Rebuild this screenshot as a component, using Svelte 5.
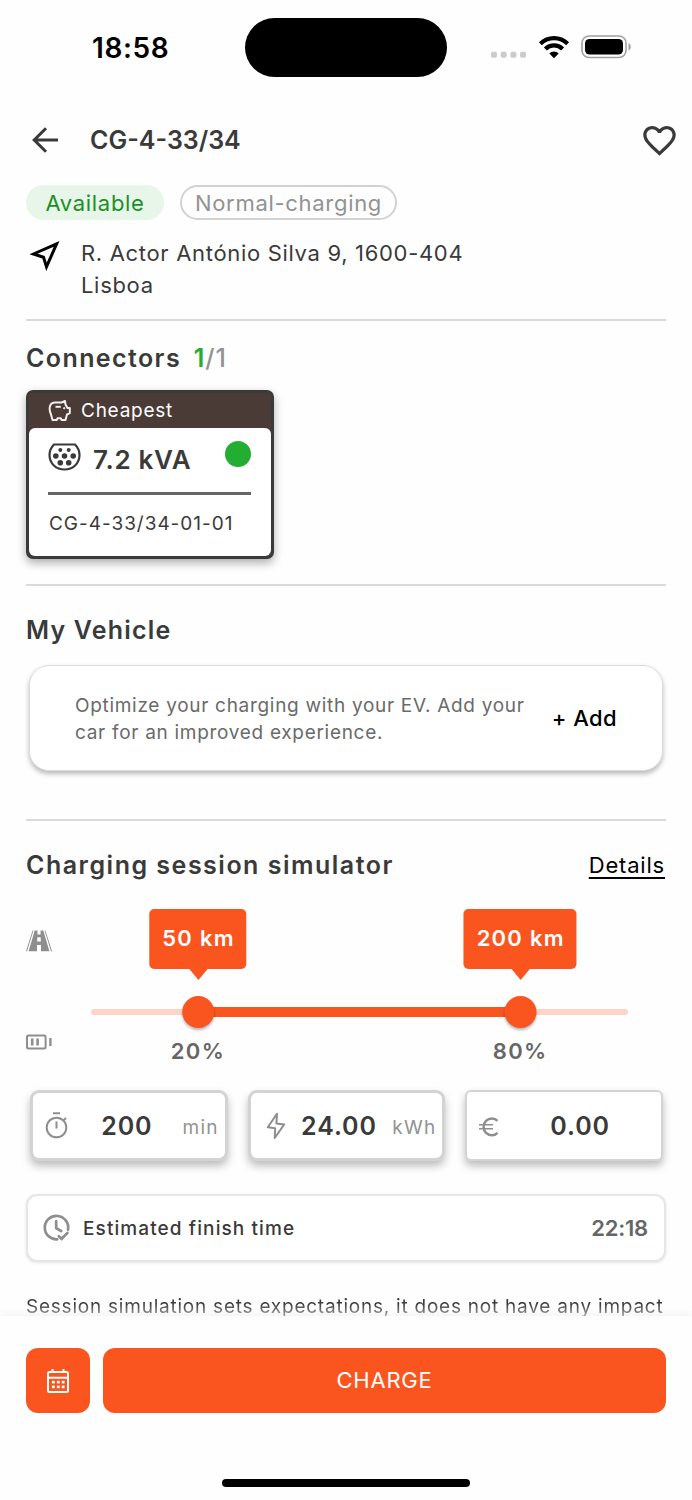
<script lang="ts">
	const minSoc = 20;
	const maxSoc = 80;

	const handles = [
		{ soc: minSoc, range: 50 },
		{ soc: maxSoc, range: 200 }
	];
</script>

<main class="screen">
	<header class="status-bar">
		<span class="clock">18:58</span>
		<div class="island"></div>
		<div class="indicators">
			<svg class="signal" width="36" height="8" viewBox="0 0 36 8" fill="#cbcbcb">
				<rect x="0" y="0.8" width="6" height="6" rx="1.8" />
				<rect x="9.7" y="0.8" width="6" height="6" rx="1.8" />
				<rect x="19.4" y="0.8" width="6" height="6" rx="1.8" />
				<rect x="29" y="0.8" width="6" height="6" rx="1.8" />
			</svg>
			<svg class="wifi" width="32" height="24" viewBox="0 0 32 24">
				<g fill="none" stroke="#000" stroke-width="4.2">
					<path d="M2.4 8.8a19.3 19.3 0 0 1 27.2 0" />
					<path d="M7.4 14a12.2 12.2 0 0 1 17.2 0" />
				</g>
				<path d="M16 23.2l-4.7-4.7a6.8 6.8 0 0 1 9.4 0z" />
			</svg>
			<svg class="battery" width="51" height="24" viewBox="0 0 51 24">
				<rect x="1" y="1" width="44" height="21.5" rx="7" fill="none" stroke="#a0a0a0" stroke-width="1.6" />
				<rect x="4" y="4" width="38" height="15.5" rx="4.5" />
				<path d="M47.5 8v7.6c3-1.4 3-6.2 0-7.6z" fill="#a0a0a0" />
			</svg>
		</div>
	</header>

	<div class="title-row">
		<svg class="back" width="28" height="28" viewBox="0 0 28 28" fill="none" stroke="#3a3a3a" stroke-width="3">
			<path d="M26 14H3M14 2.2L2.2 14L14 25.8" />
		</svg>
		<h1>CG-4-33/34</h1>
		<svg class="heart" width="39" height="39" viewBox="0 0 24 24" fill="#3a3a3a">
			<path
				d="M16.5 3c-1.74 0-3.41.81-4.5 2.09C10.91 3.81 9.24 3 7.5 3 4.42 3 2 5.42 2 8.5c0 3.78 3.4 6.86 8.55 11.54L12 21.35l1.45-1.32C18.6 15.36 22 12.28 22 8.5 22 5.42 19.58 3 16.5 3zm-4.4 15.55l-.1.1-.1-.1C7.14 14.24 4 11.39 4 8.5 4 6.5 5.5 5 7.5 5c1.54 0 3.04.99 3.57 2.36h1.87C13.46 5.99 14.96 5 16.5 5c2 0 3.5 1.5 3.5 3.5 0 2.89-3.14 5.74-7.9 10.05z"
			/>
		</svg>
	</div>

	<div class="badges">
		<span class="badge available">Available</span>
		<span class="badge speed">Normal-charging</span>
	</div>

	<div class="address">
		<svg width="30" height="30" viewBox="0 0 30 30" fill="none" stroke="#000" stroke-width="3">
			<path d="M26.6 2.9L3.5 13L13.5 16.2L16.5 25.8Z" />
		</svg>
		<p>R. Actor António Silva 9, 1600-404<br />Lisboa</p>
	</div>

	<section class="connectors">
		<h2>Connectors <span class="count"><b>1</b>/1</span></h2>
		<div class="connector-card">
			<div class="cheapest">
				<svg width="24" height="22" viewBox="0 0 24 22" fill="none" stroke="#f2eeed" stroke-width="2" stroke-linejoin="round">
					<path
						d="M7 2.5H13.5L17 1L17.5 4.5L19.5 8H21.8V13.2L19 14.5L17.5 20H13.5L12.8 18.2H9.5L8.8 20H4.5L3 14.5C1.5 11 1 8.5 2.2 5.5C3 3.5 4.5 2.5 7 2.5Z"
					/>
					<path d="M7.5 6.8H12.8" />
					<circle cx="16.2" cy="8.2" r="0.7" fill="#f2eeed" stroke-width="1" />
				</svg>
				<span>Cheapest</span>
			</div>
			<div class="connector-body">
				<div class="power">
					<svg width="33" height="28" viewBox="0 0 33 28">
						<path
							d="M6 1.5H27C30 4.5 31.5 8 31.5 12C31.5 20.5 24.8 26.5 16.5 26.5S1.5 20.5 1.5 12C1.5 8 3 4.5 6 1.5Z"
							fill="none"
							stroke="#3a3a3a"
							stroke-width="2.2"
						/>
						<g fill="#3a3a3a">
							<circle cx="12.3" cy="7" r="2" />
							<circle cx="20.7" cy="7" r="2" />
							<circle cx="7.8" cy="13" r="2.8" />
							<circle cx="16.5" cy="13" r="2.8" />
							<circle cx="25.2" cy="13" r="2.8" />
							<circle cx="12.3" cy="19.8" r="2.8" />
							<circle cx="20.7" cy="19.8" r="2.8" />
						</g>
					</svg>
					<strong>7.2 kVA</strong>
					<i class="dot"></i>
				</div>
				<p class="connector-id">CG-4-33/34-01-01</p>
			</div>
		</div>
	</section>

	<section class="vehicle">
		<h2>My Vehicle</h2>
		<div class="vehicle-card">
			<p>Optimize your charging with your EV. Add your<br />car for an improved experience.</p>
			<button class="add">+ Add</button>
		</div>
	</section>

	<section class="simulator">
		<div class="simulator-head">
			<h2>Charging session simulator</h2>
			<a href="#details">Details</a>
		</div>

		<div class="range">
			<div class="range-icons">
				<svg width="26" height="22" viewBox="0 0 26 22" fill="#8e8e8e">
					<path d="M8.7 0.5H11.4V4.5H14.6V0.5H17.3L23.4 21.2H15V15H11V21.2H2.6ZM11.4 7.2L11.1 11.5H14.9L14.6 7.2Z" fill-rule="evenodd" />
					<path d="M7.4 0.5L1 21.2H0L6.6 0.5ZM18.6 0.5L25 21.2H26L19.4 0.5Z" />
				</svg>
				<svg width="27" height="16" viewBox="0 0 27 16" fill="none" stroke="#8e8e8e" stroke-width="2">
					<rect x="1" y="1.5" width="18.6" height="13" rx="1.5" />
					<path d="M6.2 4.5V11.5M11.6 4.5V11.5" stroke-width="2.6" />
					<path d="M24.4 4V12" stroke-width="2.4" />
				</svg>
			</div>
			<div class="track">
				<div class="active" style="left: {minSoc}%; width: {maxSoc - minSoc}%"></div>
				{#each handles as handle}
					<div class="handle" style="left: {handle.soc}%">
						<span class="bubble">{handle.range} km</span>
						<span class="thumb"></span>
						<span class="soc">{handle.soc}%</span>
					</div>
				{/each}
			</div>
		</div>

		<div class="results">
			<div class="result">
				<svg width="24" height="27" viewBox="0 0 24 27" fill="none" stroke="#8e8e8e" stroke-width="2">
					<circle cx="11.5" cy="15.5" r="9.8" />
					<path d="M8 1.2H15M11.5 9.5V16.5M18.5 8.5L21 6" />
				</svg>
				<strong>200</strong>
				<span>min</span>
			</div>
			<div class="result energy">
				<svg width="20" height="28" viewBox="0 0 20 28" fill="none" stroke="#8e8e8e" stroke-width="2" stroke-linejoin="round">
					<path d="M11 1.8L1.8 15.3L9.2 16.2L8.7 26L18.2 12.4L10.4 11.6Z" />
				</svg>
				<strong>24.00</strong>
				<span>kWh</span>
			</div>
			<div class="result cost">
				<svg width="20" height="20" viewBox="0 0 20 20" fill="none" stroke="#8e8e8e">
					<path d="M18.5 3.8C17 2.2 15.2 1.4 13 1.4C8.2 1.4 4.6 5 4.6 9.8S8.2 18.2 13 18.2C15.2 18.2 17 17.4 18.5 15.8" stroke-width="2.5" />
					<path d="M0 7.8H14M0 11.8H14" stroke-width="1.6" />
				</svg>
				<strong>0.00</strong>
			</div>
		</div>

		<div class="finish">
			<svg width="28" height="28" viewBox="0 0 28 28" fill="none" stroke="#8e8e8e" stroke-width="2.7" stroke-linecap="round">
				<path d="M25 15.8A11.7 11.7 0 1 0 14.2 25.3" />
				<path d="M13.2 7V14.2L18.2 17" />
				<path d="M15.8 22.2L18.6 24.8L24.4 19" />
			</svg>
			<span>Estimated finish time</span>
			<time>22:18</time>
		</div>

		<p class="note">Session simulation sets expectations, it does not have any impact</p>
	</section>

	<footer class="actions">
		<div class="buttons">
			<button class="schedule" aria-label="Schedule">
				<svg width="24" height="26" viewBox="0 0 24 26" fill="none" stroke="#fff" stroke-width="2">
					<rect x="2" y="4" width="20" height="20" rx="1.5" />
					<path d="M2 9.7H22M6.5 1V5M17.5 1V5" />
					<g fill="#fff" stroke="none">
						<rect x="6" y="12.8" width="2.8" height="2.6" />
						<rect x="10.9" y="12.8" width="2.8" height="2.6" />
						<rect x="15.8" y="12.8" width="2.8" height="2.6" />
						<rect x="6" y="17.6" width="2.8" height="2.6" />
						<rect x="10.9" y="17.6" width="2.8" height="2.6" />
						<rect x="15.8" y="17.6" width="2.8" height="2.6" />
					</g>
				</svg>
			</button>
			<button class="charge">CHARGE</button>
		</div>
		<div class="home-indicator"></div>
	</footer>
</main>

<style>
	:global(body) {
		background: #fff;
	}
	.screen {
		display: flex;
		flex-direction: column;
		box-sizing: border-box;
		width: 692px;
		height: 1500px;
		overflow: hidden;
		background: #fefefe;
		color: #3a3a3a;
		font-family: Inter, 'Liberation Sans', sans-serif;
	}
	.screen :global(*) {
		box-sizing: border-box;
	}
	h1,
	h2,
	p {
		margin: 0;
		white-space: nowrap;
	}
	h1,
	h2 {
		font-size: 25px;
		font-weight: 600;
		line-height: 32px;
	}
	h2 {
		letter-spacing: 1.4px;
	}
	svg {
		display: block;
		flex: none;
	}
	button {
		border: 0;
		padding: 0;
		font-family: inherit;
	}

	.status-bar {
		display: grid;
		grid-template-columns: 245px 202px 1fr;
		height: 95px;
		padding-top: 18px;
		color: #000;
	}
	.clock {
		padding-left: 92px;
		font-size: 28px;
		font-weight: 600;
		line-height: 60px;
		letter-spacing: 0.6px;
	}
	.island {
		height: 59px;
		border-radius: 30px;
		background: #000;
	}
	.indicators {
		display: flex;
		height: 57px;
		align-items: center;
		padding-left: 44px;
	}
	.signal {
		margin-top: 16px;
	}
	.wifi {
		margin-left: 11px;
	}
	.battery {
		margin-left: 11px;
	}

	.title-row {
		display: flex;
		align-items: center;
		height: 90px;
		padding: 0 13px 0 32px;
	}
	h1 {
		flex: 1;
		margin-left: 30px;
	}

	.badges {
		display: flex;
		gap: 16px;
		height: 35px;
		padding-left: 26px;
	}
	.badge {
		display: flex;
		align-items: center;
		justify-content: center;
		border-radius: 18px;
		font-size: 22px;
		letter-spacing: 0.7px;
	}
	.available {
		width: 138px;
		background: #e8f6ea;
		color: #1b8f26;
	}
	.speed {
		width: 217px;
		border: 2px solid #d2d2d2;
		color: #929292;
	}

	.address {
		display: flex;
		height: 101px;
		margin: 0 26px;
		padding: 17px 0 0 4px;
		border-bottom: 2px solid #dadada;
	}
	.address svg {
		margin-top: 4px;
	}
	.address p {
		margin-left: 21px;
		font-size: 22px;
		line-height: 32px;
		letter-spacing: 0.68px;
	}

	.connectors {
		height: 265px;
		margin: 0 26px;
		padding-top: 21px;
		border-bottom: 2px solid #dadada;
	}
	.count {
		margin-left: 5px;
		color: #929292;
		font-weight: 500;
		letter-spacing: 1px;
	}
	.count b {
		color: #23ad33;
		font-weight: 600;
	}
	.connector-card {
		width: 248px;
		height: 169px;
		margin-top: 16px;
		border: 3px solid #3a3a3a;
		border-radius: 7px;
		background: #4b3b37;
		box-shadow: 0 4px 10px rgba(0, 0, 0, 0.32);
	}
	.cheapest {
		display: flex;
		align-items: center;
		height: 35px;
		padding-left: 19px;
		color: #fff;
		font-size: 19px;
		letter-spacing: 0.75px;
	}
	.cheapest span {
		margin: 0 0 0 9px;
	}
	.connector-body {
		height: 128px;
		padding: 0 20px 0 19px;
		border-radius: 6px;
		background: #fff;
	}
	.power {
		display: flex;
		align-items: center;
		height: 67px;
		padding-bottom: 7px;
		border-bottom: 3px solid #666;
	}
	.power strong {
		flex: 1;
		margin: 5px 0 0 12px;
		font-size: 26px;
		font-weight: 600;
		letter-spacing: 0.7px;
	}
	.dot {
		width: 26px;
		height: 26px;
		margin-bottom: 6px;
		border-radius: 50%;
		background: #23ad33;
	}
	.connector-id {
		padding-left: 1px;
		font-size: 19px;
		line-height: 57px;
		letter-spacing: 0.97px;
	}

	.vehicle {
		height: 235px;
		margin: 0 26px;
		padding-top: 28px;
		border-bottom: 2px solid #dadada;
	}
	.vehicle h2 {
		letter-spacing: 1.2px;
	}
	.vehicle-card {
		display: flex;
		align-items: center;
		height: 106px;
		margin: 19px 3px 0;
		padding: 0 45px;
		border: 1px solid #ddd;
		border-radius: 20px;
		background: #fff;
		box-shadow: 0 3px 5px rgba(0, 0, 0, 0.27);
	}
	.vehicle-card p {
		flex: 1;
		padding-top: 1px;
		color: #6a6a6a;
		font-size: 19px;
		line-height: 27px;
		letter-spacing: 0.7px;
	}
	.add {
		background: none;
		color: #000;
		font-size: 22px;
		font-weight: 500;
		letter-spacing: 0.4px;
	}

	.simulator {
		height: 495px;
		padding: 28px 26px 0;
	}
	.simulator-head {
		display: flex;
		justify-content: space-between;
	}
	.simulator-head h2 {
		letter-spacing: 1.5px;
	}
	.simulator-head a {
		color: #000;
		font-size: 22px;
		line-height: 33px;
		letter-spacing: 0.8px;
		margin-right: 1px;
		text-decoration: underline;
		text-decoration-thickness: 2px;
		text-underline-offset: 4px;
	}

	.range {
		display: flex;
		height: 208px;
	}
	.range-icons {
		display: flex;
		flex-direction: column;
		gap: 82px;
		width: 64.6px;
		padding-top: 48px;
	}
	.track {
		position: relative;
		width: 537px;
		height: 6px;
		margin-top: 127px;
		border-radius: 3px;
		background: #ffd4c8;
	}
	/* handles and the active bar sit on top of the track */
	.active {
		position: absolute;
		top: -2px;
		height: 10px;
		background: #fb551f;
	}
	.handle {
		position: absolute;
		top: -100px;
		display: flex;
		flex-direction: column;
		align-items: center;
		transform: translateX(-50%);
	}
	.bubble {
		height: 60px;
		padding: 0 12px 0 13px;
		border-radius: 5px;
		background: #fb551f;
		color: #fff;
		font-size: 22px;
		font-weight: 600;
		line-height: 59px;
		letter-spacing: 1.25px;
		white-space: nowrap;
	}
	.bubble::after {
		content: '';
		display: block;
		width: 20px;
		height: 12px;
		margin: 0 auto;
		background: #fb551f;
		clip-path: polygon(0 0, 100% 0, 50% 100%);
	}
	.thumb {
		width: 32px;
		height: 32px;
		margin-top: 27px;
		border-radius: 50%;
		background: #fb551f;
		box-shadow: 0 2px 3px rgba(0, 0, 0, 0.3);
	}
	.soc {
		margin-top: 8px;
		color: #666;
		font-size: 22px;
		font-weight: 600;
		line-height: 30px;
		letter-spacing: 1.4px;
	}

	.results {
		display: grid;
		grid-template-columns: repeat(3, 1fr);
		gap: 20px;
		padding: 0 3px 0 4px;
	}
	.result {
		display: flex;
		align-items: center;
		height: 71px;
		padding: 0 6px 0 12px;
		border: 3px solid #d3d3d3;
		border-radius: 9px;
		background: #fff;
		box-shadow: 0 5px 8px rgba(0, 0, 0, 0.26);
	}
	.result strong {
		flex: 1;
		padding-left: 2px;
		text-align: center;
		font-size: 25px;
		font-weight: 600;
		letter-spacing: 0.9px;
	}
	.result span {
		padding-top: 3px;
		color: #929292;
		font-size: 19px;
		letter-spacing: 1.2px;
	}
	.energy {
		padding-left: 15px;
	}
	.energy strong {
		margin-left: -2px;
	}
	.cost {
		padding-right: 2px;
		border-width: 2px;
		border-radius: 6px;
	}
	.cost svg {
		margin-top: 3px;
	}

	.finish {
		display: flex;
		align-items: center;
		height: 68px;
		margin-top: 33px;
		padding: 0 16px 0 15px;
		border: 2px solid #e6e6e6;
		border-radius: 11px;
		background: #fff;
		box-shadow: 0 1px 3px rgba(0, 0, 0, 0.1);
	}
	.finish span {
		flex: 1;
		margin-left: 12px;
		font-size: 19px;
		font-weight: 500;
		letter-spacing: 1.1px;
	}
	.finish time {
		color: #666;
		font-size: 22px;
		font-weight: 600;
		letter-spacing: -0.2px;
	}
	.note {
		margin-top: 34px;
		font-size: 19px;
		line-height: 22px;
		letter-spacing: 0.77px;
		background: linear-gradient(#3a3a3a 35%, #aaa 95%);
		background-clip: text;
		color: transparent;
	}

	.actions {
		position: relative;
		flex: 1;
		padding: 32px 26px 0;
		background: #fefefe;
		box-shadow: 0 -2px 8px rgba(0, 0, 0, 0.05);
	}
	.buttons {
		display: flex;
		gap: 13px;
	}
	.buttons button {
		display: flex;
		align-items: center;
		justify-content: center;
		height: 65px;
		border-radius: 12px;
		background: #fb551f;
	}
	.schedule {
		width: 64px;
	}
	.buttons .charge {
		flex: 1;
		padding-bottom: 2px;
		color: #fff;
		font-size: 22px;
		letter-spacing: 0.75px;
	}
	.home-indicator {
		width: 248px;
		height: 8px;
		margin: 66px auto 0;
		border-radius: 4px;
		background: #000;
	}
</style>
